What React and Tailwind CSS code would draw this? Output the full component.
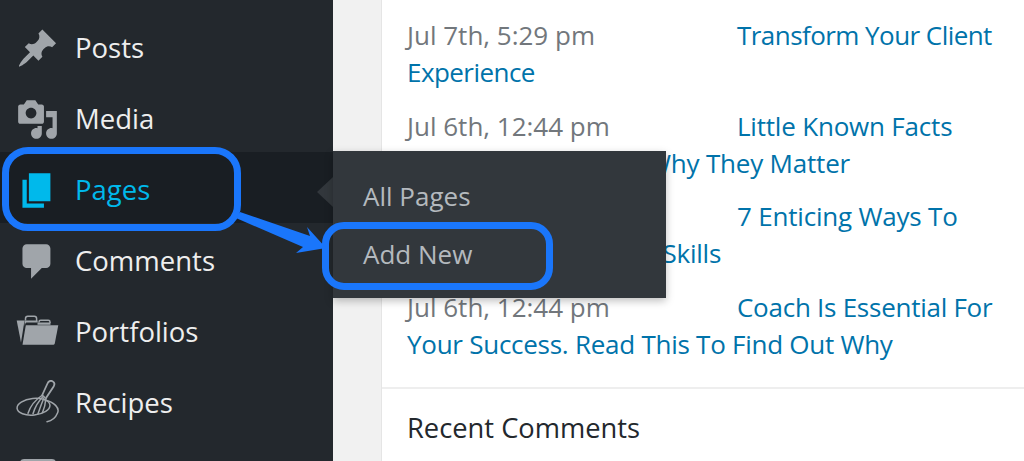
const font = { fontFamily: '"Open Sans", "Noto Sans", sans-serif' };

const PostsIcon = () => (
  <svg viewBox="0 0 20 20" className="w-[43px] h-[43px] fill-current">
    <path d="M10.44 3.02l1.82-1.82 6.36 6.35-1.83 1.82c-1.05-.68-2.48-.57-3.41.36l-.75.75c-.92.93-1.04 2.35-.35 3.41l-1.83 1.82-2.41-2.41-2.8 2.79c-.42.42-3.38 2.71-3.8 2.29s1.86-3.39 2.28-3.81l2.79-2.79L4.1 9.36l1.83-1.82c1.05.69 2.48.57 3.4-.36l.75-.75c.93-.92 1.05-2.35.36-3.41z" />
  </svg>
);

const MediaIcon = () => (
  <svg viewBox="0 0 20 20" className="w-[43px] h-[43px] fill-current">
    <path d="M13 11V4c0-.55-.45-1-1-1h-1.67L9 1H5L3.67 3H2c-.55 0-1 .45-1 1v7c0 .55.45 1 1 1h10c.55 0 1-.45 1-1zM7 4.5c1.38 0 2.5 1.12 2.5 2.5S8.38 9.5 7 9.5 4.5 8.38 4.5 7 5.62 4.5 7 4.5zM14 6h5v10.5c0 1.38-1.12 2.5-2.5 2.5S14 17.88 14 16.5s1.12-2.5 2.5-2.5c.17 0 .34.02.5.05V9h-3V6zm-4 8.05V13h2v3.5c0 1.38-1.12 2.5-2.5 2.5S7 17.88 7 16.5 8.12 14 9.5 14c.17 0 .34.02.5.05z" />
  </svg>
);

const PagesIcon = () => (
  <svg viewBox="0 0 20 20" className="w-[43px] h-[43px] fill-current">
    <path d="M6 15V2h10v13H6zm-1 1h8v2H3V5h2v11z" />
  </svg>
);

const CommentsIcon = () => (
  <svg viewBox="0 0 20 20" className="w-[43px] h-[43px] fill-current">
    <path d="M5 2h9c1.1 0 2 .9 2 2v7c0 1.1-.9 2-2 2h-2l-5 5v-5H5c-1.1 0-2-.9-2-2V4c0-1.1.9-2 2-2z" />
  </svg>
);

const PortfoliosIcon = () => (
  <svg viewBox="0 0 43 43" className="w-[43px] h-[43px] fill-current">
    {/* back flap */}
    <path d="M0.7 9.500H8.500L5 31.500 0.7 9.500z" />
    <path d="M8.500 9.500H21.500V11.500H11c-1 0-1.600.6-1.800 1.500L8.800 15 8.500 9.500zM21.500 13.800V11.500H34.500V13.800H21.500z" />
    {/* front panel */}
    <path d="M9.800 14.200H42.300L38.800 32.300c-.2 1-1 1.500-2 1.500H6.500L9.800 14.200z" />
    {/* tabs */}
    <path d="M9.500 9.500V7.500c0-1.500 1-2.300 2.300-2.300h6.500c1.300 0 2.300.8 2.300 2.300V11" fill="none" stroke="currentColor" strokeWidth="1.500" />
    <path d="M23 11.500v-.5c0-1 .8-1.700 1.700-1.700h7.600c.9 0 1.700.7 1.700 1.700v1" fill="none" stroke="currentColor" strokeWidth="1.500" />
  </svg>
);

const RecipesIcon = () => (
  <svg viewBox="0 0 43 46" className="w-[43px] h-[46px] fill-none stroke-current" strokeWidth="1.500" strokeLinecap="round">
    <ellipse cx="17.500" cy="26.700" rx="16.500" ry="8.300" transform="rotate(-6 17.500 26.700)" />
    <path d="M29 20C38 22 44 28 41.500 33 39.500 38 35 41 31 41.700" />
    <path d="M26 15.500L31.500 3.500c1-2.300 3-3.300 5-2.300 2 1 2.300 3 1.300 5L30 18" strokeWidth="1.800" />
    <path d="M26.500 15C19 20 14 27 12 33.300M27.500 16C22.500 21 19 27 17 33.800M28.500 17C26 22 24 28 22 33.800M30 18C29.500 23 28.500 28 26.500 32.500" />
  </svg>
);

const MenuRow = ({ icon, label, active }) => (
  <div className={`h-[71px] flex items-center gap-[17px] pl-4 pt-[5px] ${active ? 'bg-[#191e23] text-[#00b9eb]' : 'text-[#eeeeee]'}`}>
    <span className={`w-[43px] flex justify-center ${active ? 'text-[#00b9eb]' : 'text-[#a0a5aa]'}`}>{icon}</span>
    <span className="text-[27.5px] leading-[37px] -ml-px -mt-[2px]">{label}</span>
  </div>
);

const posts = [
  { date: 'Jul 7th, 5:29 pm', title: 'Transform Your Client Experience', tracking: 'tracking-[-0.55px]' },
  { date: 'Jul 6th, 12:44 pm', title: 'Little Known Facts About Coaches And Why They Matter', tracking: 'tracking-[-0.2px]' },
  { date: 'Jul 6th, 12:44 pm', title: '7 Enticing Ways To Improve Your Career Skills', tracking: 'tracking-[-0.2px]' },
  { date: 'Jul 6th, 12:44 pm', title: 'Coach Is Essential For Your Success. Read This To Find Out Why', tracking: 'tracking-[-0.26px]' },
];

export default function App() {
  return (
    <div className="relative flex h-[461px] w-[1024px] overflow-hidden bg-[#f1f1f1]" style={font}>
      {/* Sidebar */}
      <aside className="relative w-[333px] shrink-0 bg-[#23282d] pt-[10px]">
        <MenuRow icon={<PostsIcon />} label="Posts" />
        <MenuRow icon={<MediaIcon />} label="Media" />
        <div className="relative">
          <MenuRow icon={<PagesIcon />} label="Pages" active />
          {/* Flyout */}
          <div className="absolute left-[333px] top-[-1px] z-10 w-[333px] h-[147px] bg-[#32373c] shadow-[0_3px_8px_rgba(0,0,0,0.25)] pl-[30px] text-[#b4b9be] text-[26px] leading-[37px]">
            <div className="pt-[27px]">All Pages</div>
            <div className="pt-[21px]">Add New</div>
          </div>
          <div className="absolute left-[317px] top-[25px] w-0 h-0 border-y-[15px] border-y-transparent border-r-[16px] border-r-[#32373c]" />
        </div>
        <MenuRow icon={<CommentsIcon />} label="Comments" />
        <MenuRow icon={<PortfoliosIcon />} label="Portfolios" />
        <MenuRow icon={<RecipesIcon />} label="Recipes" />
        <div className="ml-5 mt-[23px] w-9 h-4 rounded-sm bg-[#a0a5aa]" />
      </aside>

      {/* Gutter */}
      <div className="w-[48px] shrink-0" />

      {/* Card */}
      <main className="flex-1 bg-white border-l border-[#e5e5e5]">
        <ul className="pl-[25px] pr-[24px] pt-[17px] pb-[7px] border-b-2 border-[#eeeeee] text-[26px] leading-[37px]">
          {posts.map((post, i) => (
            <li key={i} className="mb-[16.67px]">
              <span className="inline-block w-[330px] text-[#72777c]">{post.date}</span>
              <a className={`text-[#0073aa] ${post.tracking}`}>{post.title}</a>
            </li>
          ))}
        </ul>
        <h2 className="pl-[25px] mt-[20px] text-[27.3px] leading-[37px] text-[#23282d]">Recent Comments</h2>
      </main>

      {/* Annotation */}
      <div className="absolute left-[2px] top-[147px] w-[239px] h-[84px] rounded-[26px] border-[7px] border-[#1a76fb] z-20" />
      <div className="absolute left-[322px] top-[222px] w-[231px] h-[68px] rounded-[22px] border-[7px] border-[#1a76fb] z-20" />
      <svg className="absolute left-[230px] top-[205px] w-[100px] h-[55px] z-20" viewBox="230 205 100 55">
        <polygon points="240,212 310,236 307,227 326,248 296,253 303,247 236,218" fill="#1a76fb" />
      </svg>
    </div>
  );
}
